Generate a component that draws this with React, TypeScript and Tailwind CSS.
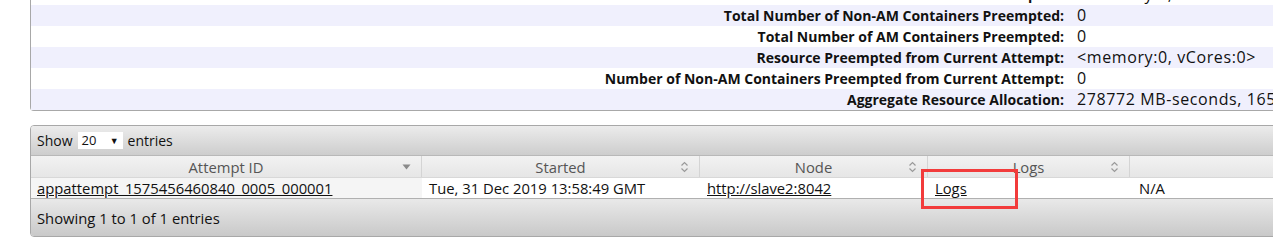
import React from "react";

const font = { fontFamily: '"Open Sans", "Noto Sans", Arial, sans-serif' };

// info rows from the attempt overview block (top one is scrolled half out of view)
const infoRows = [
  { label: "Total Resource Preempted:", value: "<memory:0, vCores:0>" },
  { label: "Total Number of Non-AM Containers Preempted:", value: "0" },
  { label: "Total Number of AM Containers Preempted:", value: "0" },
  { label: "Resource Preempted from Current Attempt:", value: "<memory:0, vCores:0>" },
  { label: "Number of Non-AM Containers Preempted from Current Attempt:", value: "0" },
  { label: "Aggregate Resource Allocation:", value: "278772 MB-seconds, 165 vcore-seconds" },
];

function SortBoth() {
  return (
    <svg width="9" height="12" viewBox="0 0 9 12" className="shrink-0">
      <path d="M1.5 4.5 L4.5 1.5 L7.5 4.5" fill="none" stroke="#9a9a9a" strokeWidth="1.2" />
      <path d="M1.5 7.5 L4.5 10.5 L7.5 7.5" fill="none" stroke="#9a9a9a" strokeWidth="1.2" />
    </svg>
  );
}

function SortDesc() {
  return (
    <svg width="9" height="6" viewBox="0 0 9 6" className="shrink-0">
      <path d="M0.5 0.5 L8.5 0.5 L4.5 5.5 Z" fill="#8a8a8a" />
    </svg>
  );
}

const columns = [
  { title: "Attempt ID", width: "w-[391px]", icon: <SortDesc /> },
  { title: "Started", width: "w-[278px]", icon: <SortBoth /> },
  { title: "Node", width: "w-[228px]", icon: <SortBoth /> },
  { title: "Logs", width: "w-[202px]", icon: <SortBoth /> },
  { title: "", width: "w-[260px]", icon: null },
];

export default function App() {
  return (
    <div className="relative w-[1273px] h-[244px] overflow-hidden bg-white text-[14.8px] text-[#111]" style={font}>
      {/* attempt info block */}
      <div className="-mt-[16px] ml-[30px] w-[1300px] border-l border-b border-[#a8a8a8] rounded-bl-[4px]">
        {infoRows.map((row, i) => (
          <div
            key={row.label}
            className={
              "grid grid-cols-[1038px_1fr] h-[21px] items-center whitespace-nowrap " +
              (i % 2 === 1 ? "bg-[#f0f0fd]" : "bg-white")
            }
          >
            <div className="text-right font-bold text-[14px] pr-[5px]">{row.label}</div>
            <div className="pl-[8px] text-[16px] tracking-[0.6px] leading-[21px]">{row.value}</div>
          </div>
        ))}
      </div>

      {/* attempts datatable */}
      <div className="mt-[14px] ml-[30px] w-[1400px] border border-[#a8a8a8] rounded-[4px] overflow-hidden">
        <div className="h-[30px] flex items-center gap-[5px] pl-[6px] text-[14px] bg-gradient-to-b from-[#ececec] to-[#cdcdcd] border-b border-[#b8b8b8]">
          <span>Show</span>
          <div className="w-[45px] h-[17px] bg-white flex items-center justify-between px-[4px] text-[13px]">
            <span>20</span>
            <span className="text-[9px]">▼</span>
          </div>
          <span>entries</span>
        </div>

        <div className="flex h-[22px] bg-gradient-to-b from-[#f2f2f2] to-[#e6e6e6] border-b border-[#d8d8d8] text-[#555]">
          {columns.map((c) => (
            <div key={c.title + c.width} className={c.width + " shrink-0 relative flex items-center justify-center pt-[1px] border-r border-[#d4d4d4]"}>
              <span>{c.title}</span>
              {c.icon && <span className="absolute right-[10px] top-0 bottom-0 flex items-center">{c.icon}</span>}
            </div>
          ))}
        </div>

        <div className="flex h-[21px] items-center whitespace-nowrap border-b border-[#b0b0b0]">
          <div className="w-[391px] shrink-0 h-full bg-[#f5f5f5] pl-[6px] flex items-center pt-[1px]">
            <a className="underline">appattempt_1575456460840_0005_000001</a>
          </div>
          <div className="w-[278px] shrink-0 pl-[7px] pt-[1px]">Tue, 31 Dec 2019 13:58:49 GMT</div>
          <div className="w-[228px] shrink-0 pl-[7px] pt-[1px]">
            <a className="underline">http://slave2:8042</a>
          </div>
          <div className="w-[202px] shrink-0 pl-[7px] pt-[1px]">
            <a className="underline">Logs</a>
          </div>
          <div className="w-[260px] shrink-0 pl-[9px] pt-[1px]">N/A</div>
        </div>

        <div className="h-[37px] flex items-center pl-[6px] pt-[2px] bg-gradient-to-b from-[#e9e9e9] to-[#c9c9c9]">
          Showing 1 to 1 of 1 entries
        </div>
      </div>

      {/* red annotation box */}
      <div className="absolute left-[921px] top-[169px] w-[97px] h-[40px] border-[3px] border-[#f23b3b]" />
    </div>
  );
}
